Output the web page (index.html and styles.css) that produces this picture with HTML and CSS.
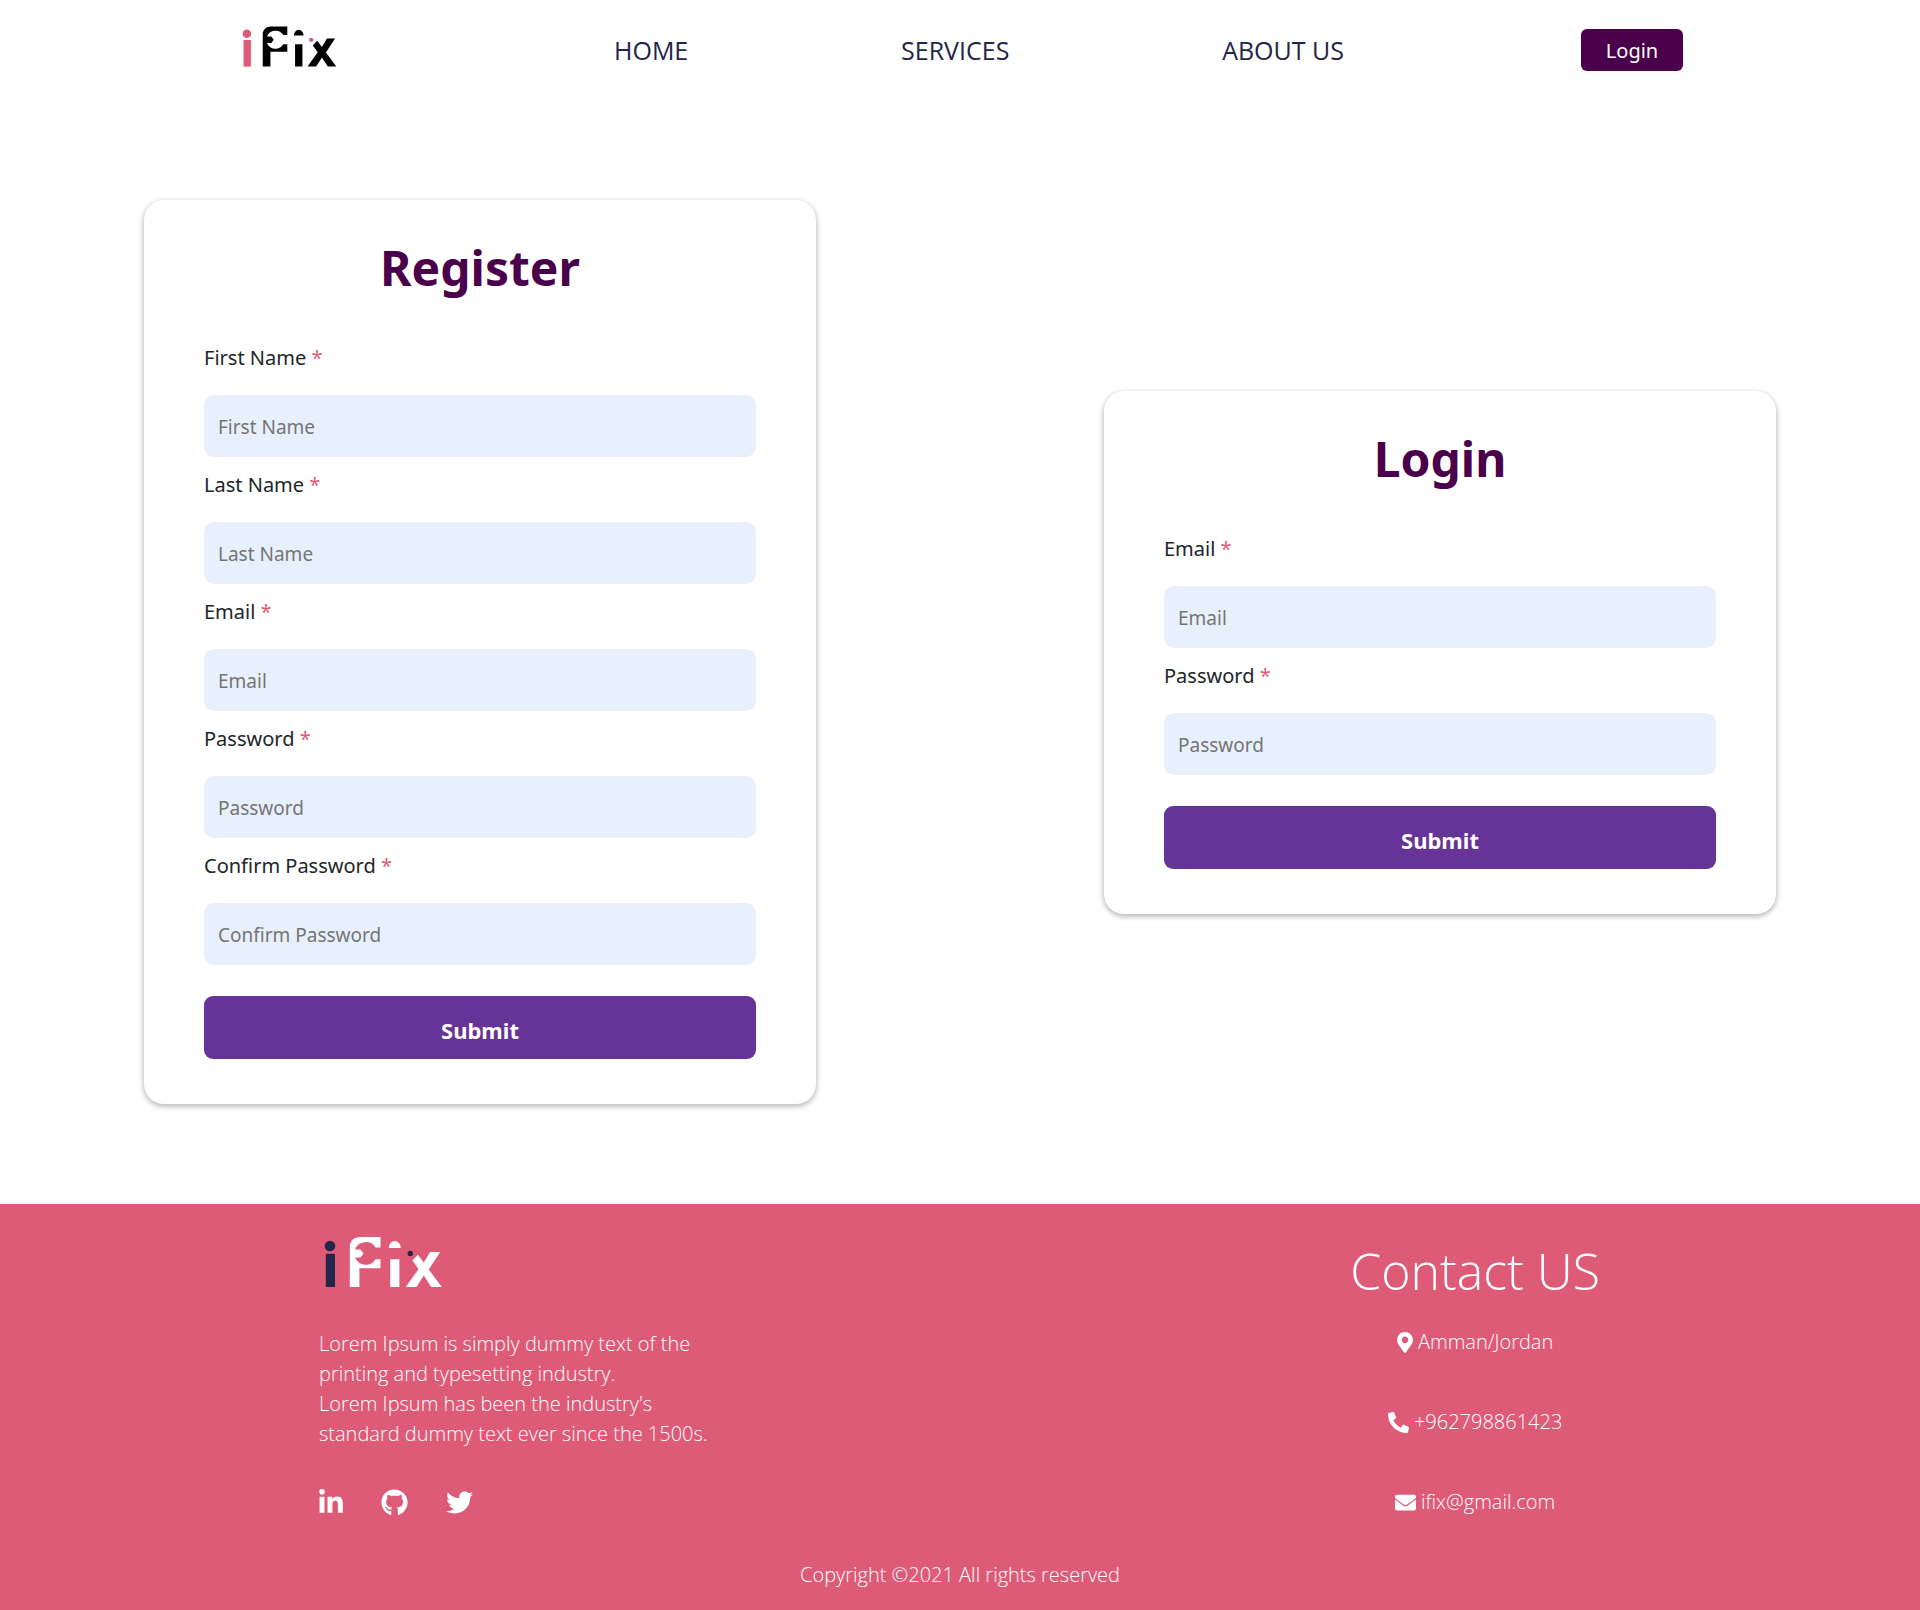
FILE: index.html
```html
<!DOCTYPE html>
<html lang="en">
<head>
<meta charset="utf-8">
<meta name="viewport" content="width=device-width, initial-scale=1">
<title>iFix</title>
<link rel="stylesheet" href="styles.css">
</head>
<body>
<svg class="sprite" aria-hidden="true">
  <symbol id="logo" viewBox="9 5 126 60">
    <g class="logo-accent">
      <circle cx="20" cy="21" r="5.3"/>
      <path d="M15.8 28.8h9.2V62h-9.2z"/>
      <circle cx="100.3" cy="28.5" r="2.7"/>
    </g>
    <path d="M50 12H70.5V22.6H65.5A11.5 11.5 0 0 0 45 24.4H50.5L53.500 28.500L50.500 32.600H45A11.5 11.5 0 0 0 65.500 34.200H70.500V43.300H49.400V62H39.800V22C39.800 16 44 12 50 12Z"/>
    <path d="M78.800 23A6 7 0 0 1 90.800 23ZM80.200 34.200h9.200V62h-9.200z"/>
    <path d="M120 27H130.200L118.800 44.500L131.800 62H121.200L113.800 50.500L106.500 62H95.800L108.500 44L102.400 35.600L107.800 29.800L113.800 37.500Z"/>
  </symbol>
</svg>

<header class="topbar">
  <a class="brand" href="#" aria-label="iFix home"><svg class="logo"><use href="#logo"/></svg></a>
  <nav class="menu">
    <a href="#">HOME</a>
    <a href="#">SERVICES</a>
    <a href="#">ABOUT US</a>
  </nav>
  <button class="login-button" type="button">Login</button>
</header>

<main class="forms">
  <form class="card">
    <h1>Register</h1>
    <label for="first-name">First Name <span class="required">*</span></label>
    <input id="first-name" type="text" placeholder="First Name">
    <label for="last-name">Last Name <span class="required">*</span></label>
    <input id="last-name" type="text" placeholder="Last Name">
    <label for="register-email">Email <span class="required">*</span></label>
    <input id="register-email" type="email" placeholder="Email">
    <label for="register-password">Password <span class="required">*</span></label>
    <input id="register-password" type="password" placeholder="Password">
    <label for="confirm-password">Confirm Password <span class="required">*</span></label>
    <input id="confirm-password" type="password" placeholder="Confirm Password">
    <button class="submit" type="submit">Submit</button>
  </form>

  <form class="card">
    <h1>Login</h1>
    <label for="login-email">Email <span class="required">*</span></label>
    <input id="login-email" type="email" placeholder="Email">
    <label for="login-password">Password <span class="required">*</span></label>
    <input id="login-password" type="password" placeholder="Password">
    <button class="submit" type="submit">Submit</button>
  </form>
</main>

<footer class="footer">
  <div class="footer-columns">
    <section class="about">
      <svg class="logo logo-light"><use href="#logo"/></svg>
      <p>Lorem Ipsum is simply dummy text of the<br>printing and typesetting industry.<br>Lorem Ipsum has been the industry's<br>standard dummy text ever since the 1500s.</p>
      <div class="social">
        <a href="#" aria-label="LinkedIn"><svg width="24" height="27" viewBox="0 0 448 512"><path d="M100.28 448H7.4V148.9h92.88zM53.79 108.1C24.09 108.1 0 83.5 0 53.8a53.79 53.79 0 0 1 107.58 0c0 29.7-24.1 54.3-53.79 54.3zM447.9 448h-92.68V302.4c0-34.7-.7-79.2-48.29-79.2-48.29 0-55.69 37.7-55.69 76.7V448h-92.78V148.9h89.08v40.8h1.3c12.4-23.5 42.69-48.3 87.88-48.3 94 0 111.28 61.9 111.28 142.3V448z"/></svg></a>
        <a href="#" aria-label="GitHub"><svg width="27" height="27" viewBox="0 0 496 512"><path d="M165.9 397.4c0 2-2.3 3.6-5.2 3.6-3.3.3-5.6-1.3-5.6-3.6 0-2 2.3-3.6 5.2-3.6 3-.3 5.6 1.3 5.6 3.6zm-31.1-4.5c-.7 2 1.3 4.3 4.3 4.9 2.6 1 5.6 0 6.2-2s-1.3-4.3-4.3-5.2c-2.6-.7-5.5.3-6.2 2.3zm44.2-1.7c-2.9.7-4.9 2.6-4.6 4.9.3 2 2.9 3.3 5.9 2.6 2.9-.7 4.9-2.6 4.6-4.6-.3-1.9-3-3.2-5.9-2.9zM244.8 8C106.1 8 0 113.3 0 252c0 110.9 69.8 205.8 169.5 239.2 12.8 2.3 17.3-5.6 17.3-12.1 0-6.2-.3-40.4-.3-61.4 0 0-70 15-84.7-29.8 0 0-11.4-29.1-27.8-36.6 0 0-22.9-15.7 1.6-15.4 0 0 24.9 2 38.6 25.8 21.9 38.6 58.6 27.5 72.9 20.9 2.3-16 8.8-27.1 16-33.7-55.9-6.2-112.3-14.3-112.3-110.5 0-27.5 7.6-41.3 23.6-58.9-2.6-6.5-11.1-33.3 2.6-67.9 20.9-6.5 69 27 69 27 20-5.6 41.5-8.5 62.8-8.5s42.8 2.9 62.8 8.5c0 0 48.1-33.6 69-27 13.7 34.7 5.2 61.4 2.6 67.9 16 17.7 25.8 31.5 25.8 58.9 0 96.5-58.9 104.2-114.8 110.5 9.2 7.9 17 22.9 17 46.4 0 33.7-.3 75.4-.3 83.6 0 6.5 4.6 14.4 17.3 12.1C428.2 457.8 496 362.9 496 252 496 113.3 383.5 8 244.8 8zM97.2 352.9c-1.3 1-1 3.3.7 5.2 1.6 1.6 3.9 2.3 5.2 1 1.3-1 1-3.3-.7-5.2-1.6-1.6-3.9-2.3-5.2-1zm32.4 35.6c-1.6 1.3-1 4.3 1.3 6.2 2.3 2.3 5.2 2.6 6.5 1 1.3-1.3.7-4.3-1.3-6.2-2.2-2.3-5.2-2.6-6.5-1zm-11.4-14.7c-1.6 1-1.6 3.6 0 5.9 1.6 2.3 4.3 3.3 5.6 2.3 1.6-1.3 1.6-3.9 0-6.2-1.4-2.3-4-3.3-5.6-2z"/></svg></a>
        <a href="#" aria-label="Twitter"><svg width="27" height="27" viewBox="0 0 512 512"><path d="M459.37 151.716c.325 4.548.325 9.097.325 13.645 0 138.72-105.583 298.558-298.558 298.558-59.452 0-114.68-17.219-161.137-47.106 8.447.974 16.568 1.299 25.34 1.299 49.055 0 94.213-16.568 130.274-44.832-46.132-.975-84.792-31.188-98.112-72.772 6.498.974 12.995 1.624 19.818 1.624 9.421 0 18.843-1.3 27.614-3.573-48.081-9.747-84.143-51.98-84.143-102.985v-1.299c13.969 7.797 30.214 12.67 47.431 13.319-28.264-18.843-46.781-51.005-46.781-87.391 0-19.492 5.197-37.36 14.294-52.954 51.655 63.675 129.3 105.258 216.365 109.807-1.624-7.797-2.599-15.918-2.599-24.04 0-57.828 46.782-104.934 104.934-104.934 30.213 0 57.502 12.67 76.67 33.137 23.715-4.548 46.456-13.32 66.599-25.34-7.798 24.366-24.366 44.833-46.132 57.827 21.117-2.273 41.584-8.122 60.426-16.243-14.292 20.791-32.161 39.308-52.628 54.253z"/></svg></a>
      </div>
    </section>

    <address class="contact">
      <h2>Contact US</h2>
      <p><svg width="16" height="21" viewBox="0 0 384 512"><path d="M172.268 501.67C26.97 291.031 0 269.413 0 192 0 85.961 85.961 0 192 0s192 85.961 192 192c0 77.413-26.97 99.031-172.268 309.67-9.535 13.774-29.93 13.773-39.464 0zM192 272c44.183 0 80-35.817 80-80s-35.817-80-80-80-80 35.817-80 80 35.817 80 80 80z"/></svg>Amman/Jordan</p>
      <p><svg width="21" height="21" viewBox="0 0 512 512"><path d="M493.4 24.6l-104-24c-11.3-2.6-22.9 3.3-27.5 13.9l-48 112c-4.2 9.8-1.4 21.3 6.9 28l60.6 49.6c-36 76.7-98.9 140.5-177.2 177.2l-49.6-60.6c-6.8-8.3-18.2-11.1-28-6.9l-112 48C3.9 366.5-2 378.1.6 389.4l24 104C27.1 504.2 36.7 512 48 512c256.1 0 464-207.5 464-464 0-11.2-7.7-20.9-18.6-23.4z" transform="matrix(-1 0 0 1 512 0)"/></svg>+962798861423</p>
      <p><svg width="21" height="21" viewBox="0 0 512 512"><path d="M502.3 190.8c3.9-3.1 9.7-.2 9.7 4.7V400c0 26.5-21.5 48-48 48H48c-26.5 0-48-21.5-48-48V195.6c0-5 5.7-7.8 9.7-4.7 22.4 17.4 52.1 39.5 154.1 113.6 21.1 15.4 56.7 47.8 92.2 47.6 35.7.3 72-32.8 92.3-47.6 102-74.1 131.6-96.3 154-113.7zM256 320c23.2.4 56.6-29.2 73.4-41.4 132.7-96.3 142.8-104.7 173.4-128.7 5.8-4.5 9.2-11.5 9.2-18.9v-19c0-26.5-21.5-48-48-48H48c-26.5 0-48 21.5-48 48v19c0 7.4 3.4 14.3 9.2 18.9 30.6 23.9 40.7 32.4 173.4 128.7 16.8 12.2 50.2 41.8 73.4 41.4z"/></svg>ifix@gmail.com</p>
    </address>
  </div>
  <p class="copyright">Copyright ©2021 All rights reserved</p>
</footer>
</body>
</html>
```
FILE: styles.css
```css
* {
  box-sizing: border-box;
}

body {
  margin: 0;
  background: #fff;
  color: #212529;
  font: 20px/30px "Noto Sans", "Open Sans", sans-serif;
}

a {
  color: inherit;
  text-decoration: none;
}

button,
input {
  border: 0;
  font-family: inherit;
}

button {
  cursor: pointer;
}

.sprite {
  position: absolute;
  width: 0;
  height: 0;
}

.topbar {
  display: flex;
  align-items: center;
  min-height: 100px;
  padding: 0 237px 0 238px;
}

.brand {
  display: flex;
  padding-bottom: 10px;
}

.logo {
  display: block;
  width: 101px;
  height: 48px;
  color: #de5b78;
  fill: #000;
}

.logo-accent {
  fill: currentColor;
}

.menu {
  display: flex;
  flex: 1;
  justify-content: space-between;
  margin: 0 237px 0 275px;
  color: #232549;
  font-family: "Open Sans", sans-serif;
  font-size: 25px;
}

.login-button {
  width: 102px;
  height: 42px;
  border-radius: 6px;
  background: #4b004b;
  color: #fff;
  font-size: 20px;
}

.forms {
  display: flex;
  flex-wrap: wrap;
  align-items: center;
  justify-content: space-around;
  padding: 100px 0;
}

.card {
  display: flex;
  flex-direction: column;
  width: 35%;
  padding: 36px 60px 45px;
  border-radius: 20px;
  background: #fff;
  box-shadow: 0 2px 5px 1px rgba(0, 0, 0, 0.25);
}

.card h1 {
  margin: 0 0 30px;
  color: #4b004b;
  font-size: 48px;
  line-height: 64px;
  text-align: center;
}

.card label {
  padding: 13px 0 22px;
}

.required {
  color: #de5b78;
}

.card input {
  width: 100%;
  height: 62px;
  padding: 2px 14px 0;
  border-radius: 10px;
  background: #e8f0fe;
  font-size: 19px;
}

.card input::placeholder {
  color: #757575;
}

.submit {
  height: 63px;
  margin-top: 31px;
  padding-top: 6px;
  border-radius: 9px;
  background: #639;
  color: #fff;
  font-size: 22px;
  font-weight: 700;
}

.footer {
  background: #de5b78;
  color: #fff;
  fill: #fff;
  font-family: "Open Sans", sans-serif;
  font-weight: 300;
}

.footer p {
  margin: 0;
}

.footer-columns {
  display: flex;
  justify-content: space-between;
  padding: 26px 320px 35px 319px;
}

.logo-light {
  width: 126px;
  height: 60px;
  color: #232549;
  fill: #fff;
}

.about p {
  margin: 39px 0 40px;
}

.social {
  display: flex;
  gap: 38px;
}

.social svg,
.contact svg {
  display: block;
}

.contact {
  display: flex;
  flex-direction: column;
  gap: 50px;
  font-style: normal;
}

.contact h2 {
  margin: 11px 0 -24px;
  font-size: 50px;
  font-weight: 300;
  line-height: 60px;
}

.contact p {
  display: flex;
  align-items: center;
  justify-content: center;
  gap: 5px;
}

.footer .copyright {
  padding: 8px 0 20px;
  text-align: center;
}

@media (max-width: 1500px) {
  .topbar {
    padding: 0 24px;
  }

  .menu {
    gap: 24px;
    margin: 0 48px;
  }

  .forms {
    gap: 48px;
  }

  .card {
    width: 560px;
  }

  .footer-columns {
    flex-wrap: wrap;
    gap: 32px;
    padding: 26px 48px 35px;
  }
}
```
